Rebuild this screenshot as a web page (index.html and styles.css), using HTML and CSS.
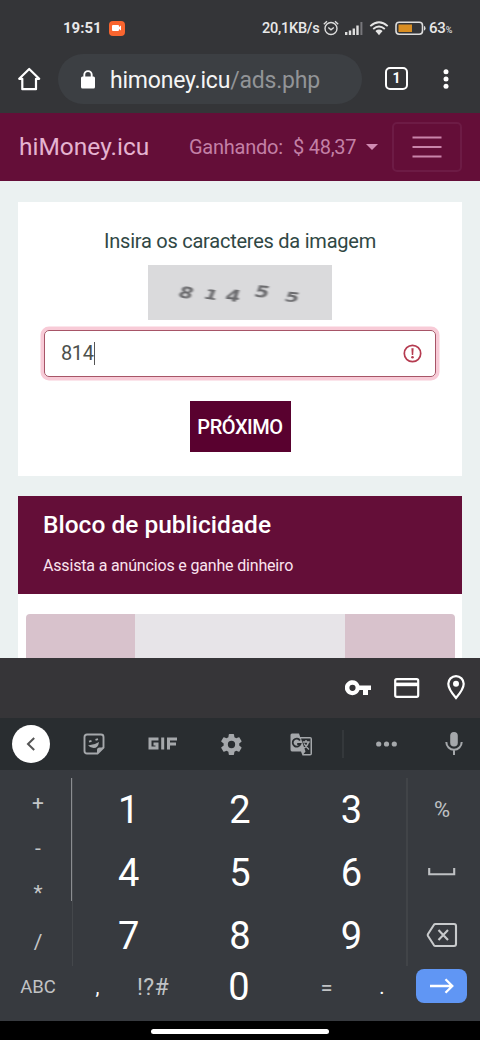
FILE: index.html
```html
<!DOCTYPE html>
<html lang="pt">
<head>
<meta charset="utf-8">
<title>hiMoney.icu</title>
<link rel="stylesheet" href="styles.css">
</head>
<body>
<div class="phone">
  <div class="status">
    <span class="clock">19:51</span>
    <span class="rec"><svg width="10" height="6" viewBox="0 0 10 6"><path fill="#fff" d="M1 0h5q1 0 1 1v1l2-1.5v5L7 4v1q0 1-1 1H1Q0 6 0 5V1q0-1 1-1z"/></svg></span>
    <span class="speed">20,1KB/s</span>
    <svg class="alarm" width="16" height="16" viewBox="0 0 16 16" fill="none" stroke="#ddd" stroke-width="1.4"><circle cx="8" cy="8.5" r="6"/><path d="M5.3 7.5 8 9.8l2.8-2.3M.8 4.2 4 1.3M15.2 4.2 12 1.3"/></svg>
    <svg class="signal" width="18" height="13" viewBox="0 0 18 13" fill="#ddd"><path d="M0 10h2.4v3H0zM3.8 8.500h2.400V13H3.800zM7.600 6.500H10V13H7.600zM11.300 3.500h2.400V13h-2.400z"/><path fill="#77777b" d="M15.400 0h2v13h-2z"/></svg>
    <svg class="wifi" width="20" height="15" viewBox="0 0 20 15" fill="none" stroke="#e5e5e5" stroke-width="1.800"><path d="M1.300 5.200Q10-2.600 18.700 5.200M4.200 8Q10 3 15.800 8M7 10.600q3-2.400 6 0"/><path fill="#e5e5e5" stroke="none" d="m6.800 10.300 3.200 4 3.200-4Q10 8 6.800 10.300z"/></svg>
    <svg class="battery" width="31" height="15" viewBox="0 0 31 15"><rect x="1" y="1.200" width="26.500" height="12" rx="3.200" fill="none" stroke="#ddd" stroke-width="1.600"/><path fill="#d98e23" d="M3.500 3.500H17v7.500H3.500z"/><path fill="#ddd" d="M29 5q1.500 0 1.500 2.200T29 9.500z"/></svg>
    <span class="charge">63<small>%</small></span>
  </div>
  <div class="browser">
    <svg class="home" width="24" height="24" viewBox="0 0 24 24" fill="none" stroke="#fff" stroke-width="2.200" stroke-linejoin="round" stroke-linecap="round"><path d="M2.200 11.800 12.200 2l10 9.800H19V22.200H5.300V11.800z"/></svg>
    <div class="url">
      <svg width="14" height="19" viewBox="0 0 14 19"><rect y="6.500" width="14" height="12" rx="1.500" fill="#fff"/><path d="M3.300 8V4.800a3.700 3.700 0 0 1 7.400 0V8" fill="none" stroke="#fff" stroke-width="1.900"/></svg>
      <span>himoney.icu<i>/ads.php</i></span>
    </div>
    <span class="tabs">1</span>
    <svg class="more" width="6" height="20" viewBox="0 0 6 20" fill="#fff"><circle cx="3" cy="2.700" r="2.500"/><circle cx="3" cy="10" r="2.500"/><circle cx="3" cy="17.300" r="2.500"/></svg>
  </div>
  <nav class="nav">
    <span class="brand">hiMoney.icu</span>
    <span class="earn">Ganhando:</span><span class="sum">$ 48,37</span>
    <span class="caret"></span>
    <span class="burger"><svg width="30" height="24" viewBox="0 0 30 24" stroke="#c984aa" stroke-width="2.200"><path d="M.500 2.500h29M.500 12h29M.500 21.500h29"/></svg></span>
  </nav>
  <main class="page">
    <section class="card">
      <p class="prompt">Insira os caracteres da imagem</p>
      <div class="captcha"><b class="d1">8</b><b class="d2">1</b><b class="d3">4</b><b class="d4">5</b><b class="d5">5</b></div>
      <div class="field"><span>814</span>
        <svg width="19" height="19" viewBox="0 0 19 19"><circle cx="9.500" cy="9.500" r="8.200" fill="none" stroke="#b53b50" stroke-width="1.700"/><path fill="#b53b50" d="M8.400 4.200h2.200l-.400 6.700H8.800z"/><circle cx="9.500" cy="13.300" r="1.300" fill="#b53b50"/></svg>
      </div>
      <div class="next">PRÓXIMO</div>
    </section>
    <section class="ads">
      <header><h2>Bloco de publicidade</h2><p>Assista a anúncios e ganhe dinheiro</p></header>
      <div class="banner"></div>
    </section>
  </main>
  <div class="autofill">
    <svg width="26" height="16" viewBox="0 0 26 16"><path fill="#fff" fill-rule="evenodd" d="M14.500 5.400A7.500 7.500 0 1 0 14.500 10H18v5h5v-5h3V5.400zM7.500 4.700a3.100 3.100 0 1 1 0 6.200 3.100 3.100 0 0 1 0-6.200z"/></svg>
    <svg class="cardicon" width="26" height="20" viewBox="0 0 26 20"><rect x="1.200" y="1.200" width="23" height="17.600" rx="1.500" fill="none" stroke="#fff" stroke-width="2.200"/><path fill="#fff" d="M1 4.600h23.500v3.600H1z"/></svg>
    <svg class="pin" width="18" height="25" viewBox="0 0 18 25"><path fill="none" stroke="#fff" stroke-width="2.200" d="M9 23Q1.300 14.200 1.300 8.800a7.700 7.700 0 0 1 15.400 0Q16.700 14.200 9 23z"/><circle cx="9" cy="8.800" r="3" fill="#fff"/></svg>
  </div>
  <div class="tools">
    <span class="back"><svg width="10" height="14" viewBox="0 0 10 14"><path d="M8.200 1 2 7l6.200 6" fill="none" stroke="#555" stroke-width="2"/></svg></span>
    <span class="tool"><svg width="22" height="22" viewBox="0 0 22 22" fill="none" stroke="#a5a8ab" stroke-width="1.900"><path d="M4 1.500h14q2.500 0 2.500 2.500v10.500l-6 6H4Q1.500 20.500 1.500 18V4q0-2.500 2.500-2.500z"/><path fill="#a5a8ab" stroke="none" d="M14 21v-4q0-2.500 2.500-2.500H21zM5 12.200q6 .300 11-3.200-.700 6-5.300 6Q7 15 5 12.200z"/><path d="m6 8.700 2.500-.800M12.500 6.800l2.500-.700"/></svg></span>
    <span class="tool gif"><svg width="29" height="13" viewBox="0 0 29 13" fill="none" stroke="#a5a8ab" stroke-width="3"><path d="M10.500 2H2v9h7V7H5.500M14.700.500v12M20.500 12.500V2H29M20.500 7H28"/></svg></span>
    <span class="tool"><svg width="25" height="25" viewBox="0 0 24 24"><path fill="#a5a8ab" d="M19.400 13a7.800 7.800 0 0 0 0-2l2.100-1.700c.200-.100.200-.400.100-.600l-2-3.500c-.100-.200-.400-.300-.600-.200l-2.500 1a7.300 7.300 0 0 0-1.700-1L14.400 2.400a.5.5 0 0 0-.500-.400h-4a.5.5 0 0 0-.500.400L9 5a7.700 7.700 0 0 0-1.700 1l-2.500-1a.5.5 0 0 0-.600.200l-2 3.500c-.100.200-.100.500.100.600L4.500 11a7.900 7.900 0 0 0 0 2l-2.200 1.700a.5.5 0 0 0-.100.600l2 3.500c.100.200.400.300.600.200l2.500-1a7.700 7.700 0 0 0 1.700 1l.400 2.600c0 .200.200.400.500.400h4c.300 0 .500-.200.500-.400l.400-2.600a7.300 7.300 0 0 0 1.700-1l2.500 1c.200.100.500 0 .600-.200l2-3.500c.100-.200.100-.500-.100-.600zM12 15.500a3.500 3.500 0 1 1 0-7 3.500 3.500 0 0 1 0 7z"/></svg></span>
    <span class="tool"><svg width="23" height="23" viewBox="0 0 23 23"><path fill="#a5a8ab" d="M2 .5h7l1.200 3.500H20q2 0 2 2v14.500q0 2-2 2h-7.500l-1.500-4H2q-1.500 0-1.500-2V2Q.500.500 2 .500z"/><path fill="#292d30" d="M11 5.500h9.500V21h-7l2-2.500z"/><path d="M10 7.400A4 4 0 1 0 10.500 11H7.200" fill="none" stroke="#292d30" stroke-width="1.800"/><path d="M12.700 9h7M16 7v2M18.500 9q-1 4-4.500 6M14 10.500q2 3.500 5 6" fill="none" stroke="#a5a8ab" stroke-width="1.400"/></svg></span>
    <span class="split"></span>
    <span class="tool dots"><svg width="21" height="6" viewBox="0 0 21 6" fill="#a5a8ab"><circle cx="2.700" cy="3" r="2.600"/><circle cx="10.500" cy="3" r="2.600"/><circle cx="18.300" cy="3" r="2.600"/></svg></span>
    <span class="tool mic"><svg width="18" height="25" viewBox="0 0 18 25"><rect x="5.200" y="1" width="7.600" height="14.500" rx="3.800" fill="#a5a8ab"/><path d="M1.300 11a7.700 7.700 0 0 0 15.400 0M9 18.700V24" fill="none" stroke="#a5a8ab" stroke-width="2"/></svg></span>
  </div>
  <div class="keyboard">
    <div class="keys">
      <div class="ops"><span>+</span><span class="minus">-</span><span class="star">*</span><span class="slash">/</span></div>
      <div class="digits"><span>1</span><span>2</span><span>3</span><span>4</span><span>5</span><span>6</span><span>7</span><span>8</span><span>9</span></div>
      <div class="side"><span>%</span><span><svg width="28" height="10" viewBox="0 0 28 10"><path d="M1.200 1v6.300h25V1" fill="none" stroke="#bfc1c4" stroke-width="2.100"/></svg></span><span><svg width="32" height="26" viewBox="0 0 32 26" fill="none" stroke="#c8cacc" stroke-width="2.100"><path stroke-linejoin="round" d="M9.500 2H28q2 0 2 2v18q0 2-2 2H9.500Q8.500 24 8 23.300L2 14q-.600-1 0-2l6-9.300Q8.500 2 9.500 2z"/><path d="m12.500 8 9.500 10M22 8l-9.500 10"/></svg></span></div>
    </div>
    <div class="bottom">
      <span class="abc">ABC</span><span class="comma">,</span><span class="sym">!?#</span><span class="zero">0</span><span class="eq">=</span><span class="dot">.</span>
      <span class="go"><svg width="24" height="16" viewBox="0 0 24 16"><path d="M0 8h22M15.500 1.200 22.300 8l-6.800 6.800" fill="none" stroke="#fff" stroke-width="2.300"/></svg></span>
    </div>
  </div>
  <div class="gesture"><span></span></div>
</div>
</body>
</html>
```
FILE: styles.css
```css
* { box-sizing: border-box; }
body { margin: 0; font-family: Roboto, sans-serif; }
svg { display: block; flex: none; }
p, h2 { margin: 0; }
.phone { width: 480px; height: 1040px; overflow: hidden; display: flex; flex-direction: column; background: #343538; }
.phone > * { flex: none; }
.status { height: 56px; display: flex; align-items: center; padding-left: 63px; color: #e8e8e8; font-size: 15px; font-weight: 500; white-space: nowrap; }
.clock { width: 46px; font-weight: 700; }
.rec { width: 16px; height: 15px; border-radius: 4px; background: #f9652f; display: flex; align-items: center; justify-content: center; }
.speed { margin-left: 137px; width: 61px; font-size: 14.500px; letter-spacing: -.25px; }
.signal { margin: 0 0 0 6px; }
.wifi { margin-left: 6px; }
.battery { margin-left: 6px; }
.charge { margin-left: 3px; font-size: 15px; letter-spacing: -.2px; }
.charge small { font-size: 9px; font-weight: 400; }
.browser { height: 57px; display: flex; align-items: flex-start; padding-left: 17px; }
.home { margin-top: 11px; }
.url { margin: -2px 0 0 17px; width: 304px; height: 50px; border-radius: 25px; background: #3c3f43; display: flex; align-items: center; padding: 2px 0 0 23px; gap: 15px; font-size: 23px; letter-spacing: -.2px; color: #f5f5f5; white-space: nowrap; }
.url svg { margin-top: -2px; }
.url i { font-style: normal; color: #929497; }
.tabs { margin: 11px 0 0 23px; width: 23px; height: 23px; border: 2.500px solid #fff; border-radius: 5px; color: #fff; font-size: 14px; font-weight: 700; line-height: 19px; text-align: center; }
.more { margin: 13px 0 0 35px; }
.nav { height: 68px; background: #640e38; display: flex; align-items: center; padding-left: 19px; color: #c380a6; font-size: 20px; white-space: nowrap; }
.brand { width: 170px; font-size: 24.500px; color: #e5b3d0; margin-top: -1px; }
.earn { width: 104px; letter-spacing: -.25px; }
.sum { width: 73px; letter-spacing: -.25px; }
.caret { border: 6px solid transparent; border-top-color: #d18bb3; border-bottom: 0; }
.burger { margin-left: 14px; width: 70px; height: 50px; border: 2px solid #6d1b45; border-radius: 5px; display: flex; align-items: center; justify-content: center; }
.page { height: 477px; overflow: hidden; background: #ebf1f1; padding: 21px 18px 0; }
.card { height: 274px; background: #fff; padding: 26px 25px 0; display: flex; flex-direction: column; align-items: center; }
.prompt { font-size: 20px; line-height: 26px; letter-spacing: -.24px; color: #304744; white-space: nowrap; }
.captcha { margin-top: 11px; width: 184px; height: 55px; background: #dadadc; display: flex; justify-content: center; align-items: center; gap: 13px; padding-right: 4px; }
.captcha b { width: 13px; font: italic bold 18px "DejaVu Sans", sans-serif; line-height: 20px; color: #6b6b6e; filter: blur(.8px); transform: rotate(8deg) scale(1.15, .85); }
.captcha .d2 { transform: translate(-1px, 2px) rotate(8deg) scale(1.1, .75); }
.captcha .d3 { transform: translate(-5px, 3px) rotate(5deg) scale(1.15, .85); }
.captcha .d4 { transform: translate(-2px, -1px) rotate(5deg) scale(1.15, .85); }
.captcha .d5 { transform: translate(2px, 4px) rotate(5deg) scale(1.15, .8); }
.field { margin-top: 10px; width: 392px; height: 47px; border: 1px solid #a75567; border-radius: 5px; box-shadow: 0 0 0 3.500px #f8cbd7; display: flex; align-items: center; justify-content: space-between; padding: 0 13px 0 16px; font-size: 20px; color: #4c504c; }
.field span { border-right: 1px solid #555; line-height: 23px; letter-spacing: -.4px; }
.next { margin-top: 24px; width: 101px; height: 51px; background: #59012f; color: #fff; font-size: 20px; letter-spacing: -.45px; font-weight: 500; line-height: 52px; text-align: center; }
.ads { margin-top: 20px; height: 180px; background: #fff; }
.ads header { height: 98px; background: #640e38; padding: 15px 25px 0; color: #fff; white-space: nowrap; }
.ads h2 { font-size: 24.500px; line-height: 28px; font-weight: 500; }
.ads p { margin-top: 17px; font-size: 16px; line-height: 20px; letter-spacing: -.17px; color: #fbe4ef; }
.banner { margin: 20px 7px 0 8px; height: 60px; border-radius: 4px; border: solid #d8c2cc; border-width: 0 110px 0 109px; background: #e7e4e8; }
.autofill { height: 60px; background: #363538; display: flex; align-items: center; padding-left: 345px; }
.cardicon { margin-left: 23px; }
.pin { margin-left: 27px; margin-top: -2px; }
.tools { height: 52px; background: #292d30; display: flex; align-items: center; padding-left: 12px; }
.tools > span { flex: none; }
.back { width: 38px; height: 38px; border-radius: 50%; background: #fff; display: flex; align-items: center; justify-content: center; margin-top: -1px; }
.tool { display: flex; justify-content: center; width: 68px; }
.back + .tool { margin-left: 10px; }
.gif { padding-bottom: 1px; }
.tools .gif + .tool { width: 71px; }
.split { width: 2px; height: 28px; margin-left: 7px; background: #34383b; }
.dots { width: 84px; }
.mic { width: 52px; padding-bottom: 2px; }
.keyboard { height: 251px; background: #373a3f; padding-top: 8px; }
.keys { height: 188px; display: grid; grid-template-columns: 73px 334px 73px; }
.ops { display: grid; grid-template-rows: 49px 44px 46px 49px; color: #c4c6c8; font-size: 21px; border-right: 1px solid #44474b; background: linear-gradient(#8b8d91, #8b8d91) right top / 1px 123px no-repeat; }
.ops span, .digits span, .side span { display: flex; align-items: center; justify-content: center; }
.ops span { transform: translate(2px, 0); }
.ops .minus { transform: translate(2px, -1px); }
.ops .star { transform: translate(2px, -1px); }
.digits { display: grid; grid-template: repeat(3, 1fr) / repeat(3, 1fr); color: #fff; font-size: 38px; padding-top: 1px; margin-bottom: -1px; }
.side { display: grid; grid-template-rows: repeat(3, 1fr); border-left: 2px solid #414448; color: #bfc1c4; font-size: 22px; padding-right: 4px; margin-left: -1px; }
.bottom { height: 42px; display: flex; align-items: center; color: #c1c3c5; font-size: 20px; }
.bottom > span { display: flex; justify-content: center; }
.abc { width: 76px; font-size: 18.500px; }
.comma { width: 43px; color: #fff; }
.sym { width: 68px; font-size: 23px; letter-spacing: .4px; }
.zero { width: 104px; color: #fff; font-size: 38px; }
.eq { width: 71px; font-size: 22px; }
.dot { width: 40px; color: #fff; }
.go { margin-left: 14px; width: 51px; height: 34px; border-radius: 8px; background: #6096f4; align-items: center; margin-top: -2px; }
.gesture { height: 19px; background: #000; padding-top: 8px; }
.gesture span { display: block; margin-left: 151px; width: 178px; height: 5px; border-radius: 3px; background: #fff; }
```
